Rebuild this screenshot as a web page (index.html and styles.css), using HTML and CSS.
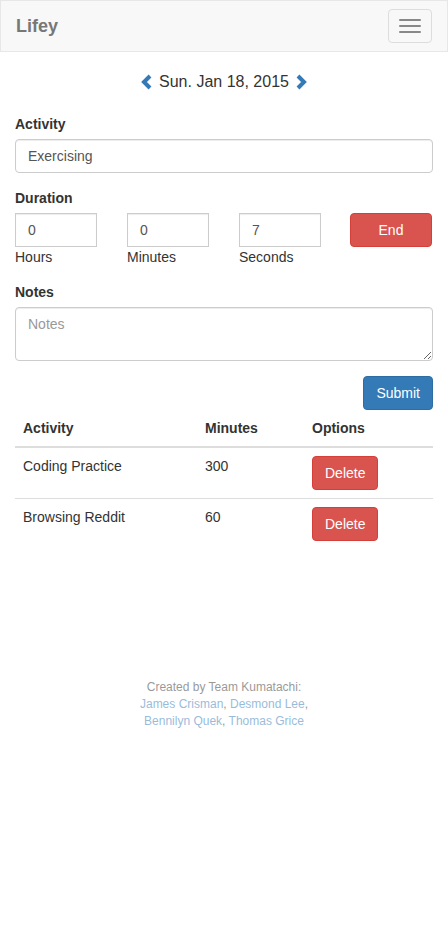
FILE: index.html
```html
<!DOCTYPE html>
<html>
	<head>
		<meta name="viewport" content="width=device-width, initial-scale=1.0" />
		<title>Lifey</title>
		<link rel="stylesheet" href="styles.css">
	</head>
	<body>
		<nav class="navbar">
			<a class="brand" href="#">Lifey</a>
			<button class="navbar-toggle" type="button">
				<span class="icon-bar"></span>
				<span class="icon-bar"></span>
				<span class="icon-bar"></span>
			</button>
		</nav>

		<div class="container">
			<div class="date-nav">
				<a href="#" class="chevron">
					<svg width="12" height="16" viewBox="0 0 12 16"><polyline points="10,2 4,8 10,14" fill="none" stroke="#337ab7" stroke-width="4" stroke-linejoin="miter"/></svg>
				</a>
				<span class="date-text">Sun. Jan 18, 2015</span>
				<a href="#" class="chevron">
					<svg width="12" height="16" viewBox="0 0 12 16"><polyline points="2,2 8,8 2,14" fill="none" stroke="#337ab7" stroke-width="4" stroke-linejoin="miter"/></svg>
				</a>
			</div>

			<form class="entry-form">
				<div class="form-group">
					<label for="activityInput">Activity</label>
					<input type="text" id="activityInput" class="form-control" value="Exercising" />
				</div>

				<div class="form-group">
					<label>Duration</label>
					<div class="row">
						<div class="col">
							<input type="text" class="form-control square" value="0" />
							<span class="help">Hours</span>
						</div>
						<div class="col">
							<input type="text" class="form-control square" value="0" />
							<span class="help">Minutes</span>
						</div>
						<div class="col">
							<input type="text" class="form-control square" value="7" />
							<span class="help">Seconds</span>
						</div>
						<div class="col">
							<button type="button" class="btn btn-danger btn-block btn-end">End</button>
						</div>
					</div>
				</div>

				<div class="form-group">
					<label for="notesInput">Notes</label>
					<textarea id="notesInput" class="form-control" rows="2" placeholder="Notes"></textarea>
				</div>

				<div class="form-actions">
					<button type="submit" class="btn btn-primary">Submit</button>
				</div>
			</form>

			<table class="table">
				<thead>
					<tr>
						<th class="col-activity">Activity</th>
						<th class="col-minutes">Minutes</th>
						<th>Options</th>
					</tr>
				</thead>
				<tbody>
					<tr>
						<td>Coding Practice</td>
						<td>300</td>
						<td><button class="btn btn-danger">Delete</button></td>
					</tr>
					<tr>
						<td>Browsing Reddit</td>
						<td>60</td>
						<td><button class="btn btn-danger">Delete</button></td>
					</tr>
				</tbody>
			</table>
		</div>

		<footer class="footer">
			Created by Team Kumatachi:<br />
			<a href="#">James Crisman</a>, <a href="#">Desmond Lee</a>,<br />
			<a href="#">Bennilyn Quek</a>, <a href="#">Thomas Grice</a>
		</footer>
	</body>
</html>
```

FILE: styles.css
```css
* {
	box-sizing: border-box;
}

body {
	margin: 0;
	font-family: "Liberation Sans", Arial, sans-serif;
	font-size: 14px;
	line-height: 20px;
	color: #333;
	background-color: #fff;
}

a {
	color: #337ab7;
	text-decoration: none;
}

/* Navbar */
.navbar {
	display: flex;
	justify-content: space-between;
	align-items: flex-start;
	height: 52px;
	background-color: #f8f8f8;
	border: 1px solid #e7e7e7;
	margin-bottom: 20px;
}

.brand {
	padding: 15px;
	font-size: 18px;
	font-weight: bold;
	line-height: 20px;
	color: #777;
}

.navbar-toggle {
	margin: 8px 15px 8px 0;
	padding: 9px 10px;
	width: 44px;
	height: 34px;
	background: transparent;
	border: 1px solid #ddd;
	border-radius: 4px;
	display: flex;
	flex-direction: column;
	gap: 4px;
	align-items: center;
	justify-content: center;
}

.icon-bar {
	display: block;
	width: 22px;
	height: 2px;
	border-radius: 1px;
	background-color: #888;
}

/* Content */
.container {
	padding: 0 15px;
}

.date-nav {
	display: flex;
	justify-content: center;
	align-items: center;
	gap: 7px;
	height: 20px;
	margin-bottom: 22px;
}

.date-text {
	font-size: 16px;
}

.chevron {
	display: flex;
}

.form-group {
	margin-bottom: 15px;
}

label {
	display: block;
	font-weight: bold;
	margin-bottom: 5px;
}

.form-control {
	display: block;
	width: 100%;
	height: 34px;
	padding: 6px 12px;
	font-family: inherit;
	font-size: 14px;
	line-height: 20px;
	color: #555;
	background-color: #fff;
	border: 1px solid #ccc;
	border-radius: 4px;
	box-shadow: inset 0 1px 1px rgba(0, 0, 0, 0.075);
}

.form-control.square {
	border-radius: 0;
}

textarea.form-control {
	height: 54px;
	resize: vertical;
}

textarea::placeholder {
	color: #999;
}

.row {
	display: grid;
	grid-template-columns: repeat(4, 1fr);
	margin: 0 -15px;
}

.col {
	padding: 0 15px;
}

.help {
	display: block;
}

.btn {
	display: inline-block;
	padding: 6px 12px;
	font-family: inherit;
	font-size: 14px;
	line-height: 20px;
	color: #fff;
	border: 1px solid transparent;
	border-radius: 4px;
	cursor: pointer;
}

.btn-block {
	display: block;
	width: 100%;
}

.btn-end {
	margin-left: -1px;
}

.btn-danger {
	background-color: #d9534f;
	border-color: #d43f3a;
}

.btn-primary {
	background-color: #337ab7;
	border-color: #2e6da4;
}

.form-actions {
	display: flex;
	justify-content: flex-end;
}

/* Table */
.table {
	width: 100%;
	border-collapse: collapse;
	border-spacing: 0;
}

.table th,
.table td {
	padding: 8px;
	text-align: left;
	vertical-align: top;
	line-height: 20px;
}

.table th {
	border-bottom: 2px solid #ddd;
}

.table td {
	border-top: 1px solid #ddd;
}

.col-activity {
	width: 182px;
}

.col-minutes {
	width: 107px;
}

/* Footer */
.footer {
	margin-top: 130px;
	text-align: center;
	font-size: 12px;
	line-height: 17px;
	opacity: 0.5;
}
```
